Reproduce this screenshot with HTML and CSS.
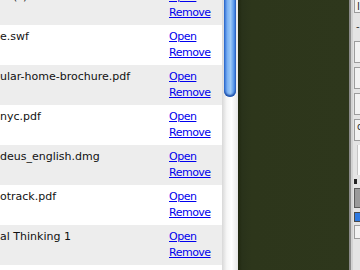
FILE: index.html
```html
<!DOCTYPE html>
<html lang="en">
<head>
    <meta charset="UTF-8">
    <title>Downloads</title>
    <link rel="stylesheet" href="styles.css">
</head>
<body>

<div class="window">
    <div class="downloads">
        <div class="row odd">
            <span class="name">ile(s).swf</span>
            <span class="actions"><a href="#">Open</a><a href="#">Remove</a></span>
        </div>
        <div class="row">
            <span class="name">e.swf</span>
            <span class="actions"><a href="#">Open</a><a href="#">Remove</a></span>
        </div>
        <div class="row odd">
            <span class="name">ular-home-brochure.pdf</span>
            <span class="actions"><a href="#">Open</a><a href="#">Remove</a></span>
        </div>
        <div class="row">
            <span class="name">nyc.pdf</span>
            <span class="actions"><a href="#">Open</a><a href="#">Remove</a></span>
        </div>
        <div class="row odd">
            <span class="name">deus_english.dmg</span>
            <span class="actions"><a href="#">Open</a><a href="#">Remove</a></span>
        </div>
        <div class="row">
            <span class="name">otrack.pdf</span>
            <span class="actions"><a href="#">Open</a><a href="#">Remove</a></span>
        </div>
        <div class="row odd">
            <span class="name">al Thinking 1</span>
            <span class="actions"><a href="#">Open</a><a href="#">Remove</a></span>
        </div>
        <div class="row"></div>
    </div>

    <div class="scrollbar">
        <div class="thumb"></div>
    </div>

    <div class="stage"></div>

    <div class="panel">
        <div class="box tall-1"><span class="glyph">I</span></div>
        <div class="mark">-</div>
        <div class="box tall-2"></div>
        <div class="box tall-2"></div>
        <div class="box tall-2"></div>
        <div class="box tall-2"><span class="glyph">q</span></div>
        <div class="inset"></div>
        <div class="dash"></div>
        <div class="button"></div>
        <div class="check"></div>
        <div class="box tall-1"></div>
    </div>
</div>

</body>
</html>
```

FILE: styles.css
```css
body {
    margin: 0;
    width: 360px;
    height: 270px;
    overflow: hidden;
    font-family: "DejaVu Sans", sans-serif;
    font-size: 11px;
}

.window {
    display: flex;
    height: 270px;
}

.downloads {
    width: 222px;
    flex-shrink: 0;
    margin-top: -15px;
    background: #fff;
}

.row {
    display: flex;
    height: 40px;
    box-sizing: border-box;
    padding: 4px 0 4px 0;
    line-height: 16px;
    background: #fff;
}

.row.odd {
    background: #ededed;
}

.row .name {
    flex: 1;
    color: #111;
    white-space: nowrap;
    overflow: hidden;
}

.row .actions {
    width: 53px;
    display: flex;
    flex-direction: column;
}

.row .actions a {
    color: #0000ee;
    text-decoration: underline;
    letter-spacing: -0.5px;
}

/* barra de rolagem estilo aqua */
.scrollbar {
    width: 16px;
    flex-shrink: 0;
    padding: 0 2px;
    box-sizing: border-box;
    background: linear-gradient(to right, #d8d8d8, #f6f6f6 30%, #fff 60%, #e6e6e6);
}

.thumb {
    height: 97px;
    border-radius: 0 0 6px 6px;
    background: linear-gradient(to right, #2f6fd6, #7fb4f4 30%, #9ccaf8 55%, #4f90e8 85%, #2a63c4);
    box-shadow: inset 0 -2px 2px #1e4fa8;
}

.stage {
    flex: 1;
    background: linear-gradient(to right, #20270f, #29321a 4px, #2d361b 14px, #2e371c);
    border-right: 2px solid #8a8a8a;
}

.panel {
    width: 9px;
    flex-shrink: 0;
    background: #e4e4e4;
    border-left: 2px solid #d2d2d2;
    box-sizing: border-box;
    padding-left: 1px;
    display: flex;
    flex-direction: column;
    gap: 4px;
    overflow: hidden;
}

.box {
    background: #f2f2f2;
    border: 1px solid #9c9c9c;
    border-right: none;
}

.box.tall-1 {
    height: 12px;
    margin-top: -1px;
}

.box.tall-2 {
    height: 20px;
}

.glyph {
    font-size: 10px;
    color: #333;
    margin-left: 2px;
    line-height: 12px;
}

.mark {
    height: 20px;
    font-size: 10px;
    line-height: 20px;
    color: #333;
    padding-left: 2px;
}

.inset {
    height: 30px;
    margin-left: 3px;
    background: #fafafa;
    border-left: 1px solid #c4c4c4;
}

.dash {
    height: 5px;
    width: 3px;
    background: #222;
}

.button {
    height: 18px;
    background: #9a9a9a;
    border: 1px solid #5c5c5c;
    border-right: none;
}

.check {
    height: 8px;
    background: #2d79e0;
    border: 1px solid #4a4a4a;
    border-right: none;
}
```
